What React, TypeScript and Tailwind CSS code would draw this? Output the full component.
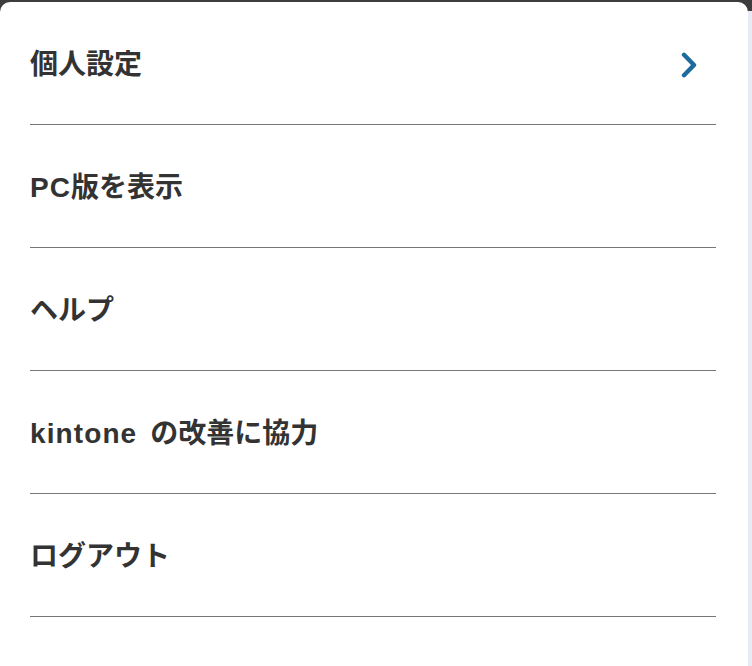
import React from 'react';

interface MenuItem {
  id: string;
  label: string;
  hasChildren?: boolean;
}

const menuItems: MenuItem[] = [
  { id: 'personal', label: '個人設定', hasChildren: true },
  { id: 'pc', label: 'PC版を表示' },
  { id: 'help', label: 'ヘルプ' },
  { id: 'feedback', label: 'kintone の改善に協力' },
  { id: 'logout', label: 'ログアウト' },
];

// Latin runs get a little extra spacing so they sit wider next to the kana
const splitLabel = (label: string) => label.split(/([A-Za-z]+ ?)/).filter(Boolean);

const ChevronRight: React.FC = () => (
  <svg width="18" height="26" viewBox="0 0 18 26" fill="none" aria-hidden="true">
    <path d="M4 2.8 L14 13 L4 23.2" stroke="#1e6a9f" strokeWidth="4.4" strokeLinecap="round" strokeLinejoin="round" />
  </svg>
);

export default function App() {
  return (
    <div className="flex h-[666px] w-[752px] overflow-hidden bg-[#3d3d3d] pt-[2px]">
      <div className="flex-1 rounded-t-[10px] bg-white pl-[30px] pr-[32px]">
        <ul>
          {menuItems.map(item => (
            <li
              key={item.id}
              className="flex h-[123px] items-center justify-between border-b border-[#777777] pr-[18px] pt-[4px]"
              style={{ fontFamily: '"Liberation Sans", "Noto Sans CJK JP", sans-serif' }}
            >
              <span className="text-[28px] font-bold leading-none text-[#333333]">
                {splitLabel(item.label).map((part, i) =>
                  /[A-Za-z]/.test(part) ? (
                    <span key={i} className={part.endsWith(' ') ? 'mr-[4px] tracking-[1.1px]' : 'tracking-[1.1px]'}>
                      {part}
                    </span>
                  ) : (
                    <span key={i}>{part}</span>
                  )
                )}
              </span>
              {item.hasChildren && <ChevronRight />}
            </li>
          ))}
        </ul>
      </div>
      <div className="mt-[9px] w-[4px] bg-[#e8ebf3]" />
    </div>
  );
}
